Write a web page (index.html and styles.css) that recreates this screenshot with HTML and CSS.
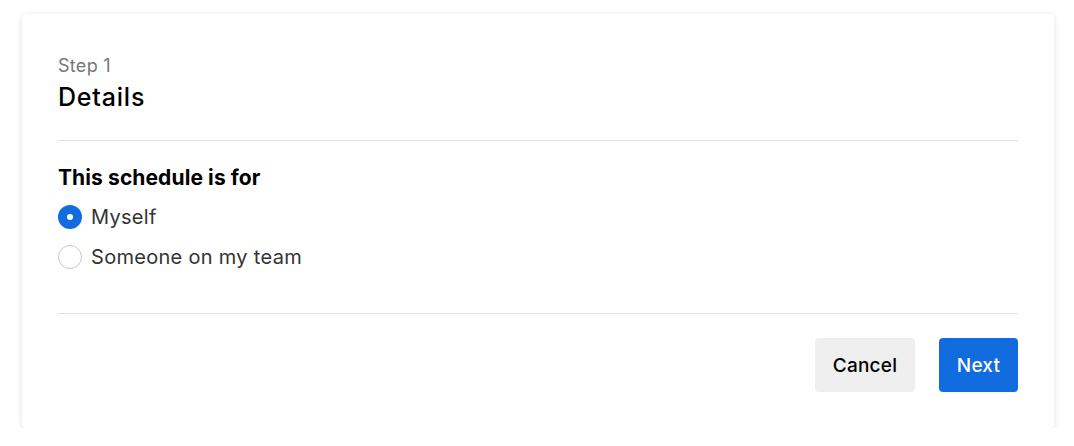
FILE: index.html
```html
<!DOCTYPE html>
<html>
<head>
<meta charset="utf-8">
<link rel="stylesheet" href="styles.css">
</head>
<body>
<div class="card">
  <div class="header">
    <div class="step">Step 1</div>
    <h1 class="title">Details</h1>
  </div>
  <div class="body">
    <div class="label">This schedule is for</div>
    <label class="option">
      <span class="radio checked"></span>
      <span class="option-text">Myself</span>
    </label>
    <label class="option">
      <span class="radio"></span>
      <span class="option-text">Someone on my team</span>
    </label>
  </div>
  <div class="footer">
    <button class="btn btn-secondary">Cancel</button>
    <button class="btn btn-primary">Next</button>
  </div>
</div>
</body>
</html>
```
FILE: styles.css
```css
* { box-sizing: border-box; }
body {
  margin: 0;
  background: #fff;
  font-family: Inter, "Noto Sans", sans-serif;
}
.card {
  margin: 14px 0 0 22px;
  width: 1032px;
  height: 414px;
  background: #fff;
  border-radius: 4px;
  box-shadow: 0 1px 6px rgba(0,0,0,0.12);
  padding: 0 36px;
  display: flex;
  flex-direction: column;
}
.header {
  padding: 40px 0 27px;
  border-bottom: 1px solid #e1e1e1;
}
.step {
  font-size: 18px;
  line-height: 24px;
  letter-spacing: 0.3px;
  color: #767676;
}
.title {
  margin: 3px 0 0;
  font-size: 25px;
  line-height: 32px;
  letter-spacing: 0.8px;
  font-weight: 500;
  color: #000;
}
.body {
  padding: 23px 0 36px;
  border-bottom: 1px solid #e1e1e1;
  display: flex;
  flex-direction: column;
}
.label {
  font-size: 21px;
  line-height: 28px;
  letter-spacing: 0.1px;
  font-weight: 700;
  color: #000;
  margin-bottom: 5px;
}
.option {
  display: flex;
  align-items: center;
  gap: 9px;
  height: 40px;
}
.radio {
  width: 24px;
  height: 24px;
  border-radius: 50%;
  border: 1px solid #c8c8c8;
  background: #fff;
  flex: none;
}
.radio.checked {
  border: 9px solid #116ddf;
  background: #fff;
}
.option-text {
  font-size: 20px;
  letter-spacing: 0.3px;
  color: #333;
}
.footer {
  display: flex;
  justify-content: flex-end;
  gap: 24px;
  padding-top: 24px;
}
.btn {
  height: 54px;
  border: none;
  border-radius: 4px;
  font-family: Inter, "Noto Sans", sans-serif;
  font-size: 19px;
  letter-spacing: 0.2px;
  font-weight: 500;
  padding: 0;
}
.btn-secondary {
  background: #efefef;
  color: #000;
  width: 100px;
}
.btn-primary {
  background: #116ddf;
  color: #fff;
  width: 79px;
}
```
